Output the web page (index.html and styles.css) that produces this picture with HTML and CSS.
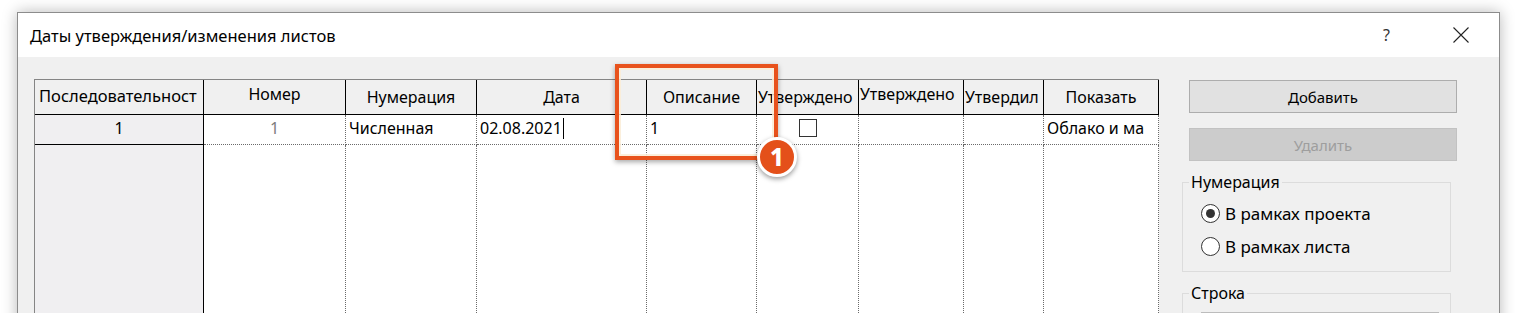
FILE: index.html
```html
<!DOCTYPE html>
<html lang="ru">
<head>
<meta charset="UTF-8">
<title>Даты утверждения/изменения листов</title>
<link rel="stylesheet" href="styles.css">
</head>
<body>
<div class="dialog">
  <div class="titlebar">
    <span class="title">Даты утверждения/изменения листов</span>
    <span class="help">?</span>
    <span class="close">
      <svg width="16" height="16" viewBox="0 0 16 16"><path d="M0.5 0.5 L15.5 15.5 M15.5 0.5 L0.5 15.5" stroke="#222" stroke-width="1.1" fill="none"/></svg>
    </span>
  </div>

  <div class="content">
    <!-- таблица изменений -->
    <div class="sheets">
      <div class="th seq-h">Последовательност</div>
      <div class="th hi">Номер</div>
      <div class="th">Нумерация</div>
      <div class="th">Дата</div>
      <div class="th">Описание</div>
      <div class="th left">Утверждено</div>
      <div class="th left hi">Утверждено</div>
      <div class="th left">Утвердил</div>
      <div class="th">Показать</div>

      <div class="td seq center">1</div>
      <div class="td center muted">1</div>
      <div class="td">Численная</div>
      <div class="td">02.08.2021<span class="caret"></span></div>
      <div class="td">1</div>
      <div class="td center"><span class="check"></span></div>
      <div class="td"></div>
      <div class="td"></div>
      <div class="td">Облако и ма</div>

      <div class="fill seq"></div>
      <div class="fill"></div>
      <div class="fill"></div>
      <div class="fill"></div>
      <div class="fill"></div>
      <div class="fill"></div>
      <div class="fill"></div>
      <div class="fill"></div>
      <div class="fill"></div>
    </div>

    <div class="side">
      <button class="btn">Добавить</button>
      <button class="btn" disabled>Удалить</button>

      <fieldset class="group">
        <legend>Нумерация</legend>
        <label class="radio"><span class="dot on"></span>В рамках проекта</label>
        <label class="radio"><span class="dot"></span>В рамках листа</label>
      </fieldset>

      <fieldset class="group">
        <legend>Строка</legend>
        <div class="field"></div>
      </fieldset>
    </div>
  </div>
</div>

<!-- выноска -->
<div class="callout"></div>
<div class="badge">1</div>
</body>
</html>
```

FILE: styles.css
```css
body {
  margin: 0;
  height: 313px;
  overflow: hidden;
  background: #fff;
  font-family: "Noto Sans", "Open Sans", sans-serif;
  font-size: 16px;
  color: #000;
}

/* окно */
.dialog {
  margin: 12px 0 0 17px;
  width: 1483px;
  height: 420px;
  box-sizing: border-box;
  border: 1px solid #8c8c8c;
  background: #f0f0f0;
  box-shadow: 0 0 14px rgba(0,0,0,.28);
}
.titlebar {
  height: 44px;
  background: #fff;
  display: flex;
  align-items: center;
}
.title {flex: 1; padding-left: 12px; font-size: 16.5px;}
.help {width: 70px; font-size: 16px; color: #333;}
.close {width: 46px; display: flex;}

.content {
  display: flex;
  padding: 22px 0 0 16px;
}

/* таблица */
.sheets {
  display: grid;
  grid-template-columns: 169px 142px 131px 170px 110px 102px 105px 80px 115px;
  grid-template-rows: 35px 30px 200px;
  border-top: 1px solid #858585;
  border-left: 1px solid #858585;
}
.th {
  box-sizing: border-box;
  border-right: 1px solid #000;
  border-bottom: 1px solid #000;
  background: #f0f0f0;
  text-align: center;
  padding-top: 6px;
  white-space: nowrap;
  overflow: hidden;
}
.th.hi {padding-top: 3px;}
.th.left {text-align: left; padding-left: 1px;}
.th.seq-h {text-align: left; padding-left: 4px; padding-top: 4px; font-size: 16.5px;}
.td {
  box-sizing: border-box;
  background: #fff;
  border-right: 1px dotted #6a6a6a;
  border-bottom: 1px dotted #6a6a6a;
  padding: 2px 0 0 3px;
  white-space: nowrap;
  overflow: hidden;
}
.td.center {text-align: center; padding-left: 0;}
.td.muted {color: #7d7d7d;}
.fill {
  background: #fff;
  border-right: 1px dotted #6a6a6a;
}
.seq {
  background: #f0eff1;
  border-right: 1px solid #000;
}
.td.seq {border-bottom: 1px solid #000;}
.caret {
  display: inline-block;
  width: 1px;
  height: 21px;
  margin-left: 1px;
  background: #000;
  vertical-align: -5px;
}
.check {
  display: inline-block;
  width: 18px;
  height: 18px;
  box-sizing: border-box;
  border: 1px solid #333;
  background: #fff;
  margin-top: 2px;
}

/* правая панель */
.side {
  margin-left: 23px;
  width: 276px;
  display: flex;
  flex-direction: column;
}
.btn {
  margin: 1px 0 0 7px;
  width: 268px;
  height: 33px;
  border: 1px solid #adadad;
  background: #e1e1e1;
  font: inherit;
  font-size: 15px;
  color: #000;
}
.btn[disabled] {
  margin-top: 15px;
  background: #cccccc;
  border-color: #c2c2c2;
  color: #9e9e9e;
}
.group {
  margin: 10px 0 0 0;
  width: 269px;
  box-sizing: border-box;
  border: 1px solid #dcdcdc;
  padding: 4px 0 8px 18px;
}
.group + .group {margin-top: 10px;}
.group legend {padding: 0 2px; margin-left: -12px;}
.radio {
  display: flex;
  align-items: center;
  height: 33px;
  font-size: 17px;
}
.dot {
  width: 19px;
  height: 19px;
  box-sizing: border-box;
  border: 1px solid #333;
  border-radius: 50%;
  background: #fff;
  margin-right: 5px;
  position: relative;
}
.dot.on::after {
  content: "";
  position: absolute;
  left: 4px;
  top: 4px;
  width: 9px;
  height: 9px;
  border-radius: 50%;
  background: #333;
}
.field {
  margin: 4px 0 0 0;
  width: 236px;
  height: 30px;
  border: 1px solid #bcbcbc;
  background: #fff;
}

/* выноска */
.callout {
  position: absolute;
  left: 615px;
  top: 64px;
  width: 163px;
  height: 96px;
  box-sizing: border-box;
  border: 4px solid #e8521c;
  box-shadow: inset 0 0 0 2px rgba(250,236,214,.85), 0 2px 5px rgba(0,0,0,.35);
}
.badge {
  position: absolute;
  left: 757px;
  top: 137px;
  width: 40px;
  height: 40px;
  box-sizing: border-box;
  border: 3px solid #fff;
  border-radius: 50%;
  background: #e4501a;
  color: #fff;
  font: 800 24px/34px "Noto Sans", sans-serif;
  text-align: center;
  box-shadow: 0 2px 5px rgba(0,0,0,.4);
}
```
